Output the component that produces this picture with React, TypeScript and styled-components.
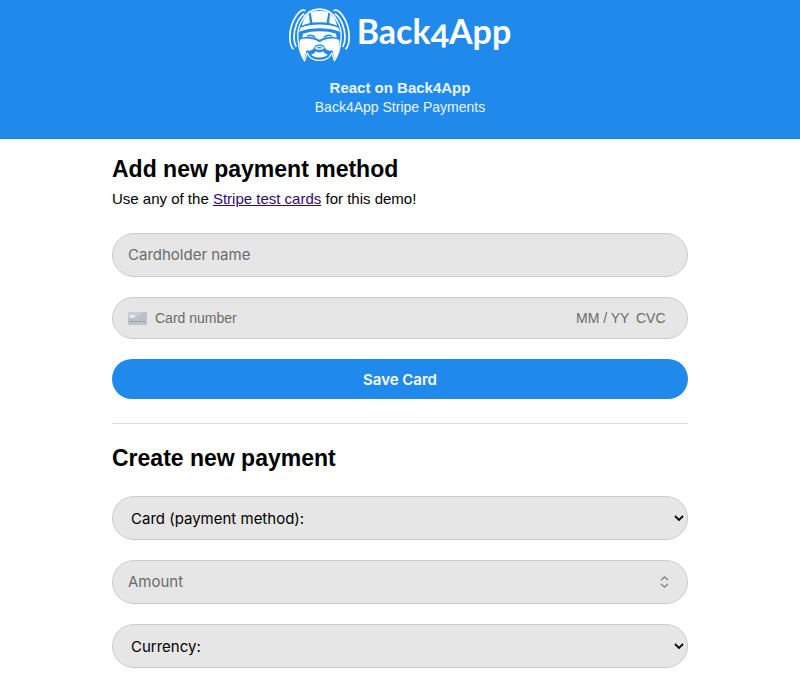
import React from "react";
import styled, { createGlobalStyle } from "styled-components";

const sans = `"Liberation Sans", Arial, sans-serif`;
const ui = `Inter, "Liberation Sans", sans-serif`;
const blue = "#208aec";

const GlobalStyle = createGlobalStyle`
  *, *::before, *::after { box-sizing: border-box; }
  body {
    margin: 0;
    background: #fff;
    color: #000;
    font-family: ${sans};
    font-size: 15px;
  }
`;

const Header = styled.header`
  display: flex;
  flex-direction: column;
  align-items: center;
  padding: 8px 16px 22px;
  background: ${blue};
  border-bottom: 1px solid #1d7fdb;
  color: #e9f4ff;
  text-align: center;
`;

const Brand = styled.div`
  display: flex;
  align-items: center;
  gap: 7px;
  height: 54px;
  margin-bottom: 16px;
  color: #fff;
`;

const BrandName = styled.span`
  padding-bottom: 8px;
  font-family: Lato, ${sans};
  font-size: 34px;
  font-weight: 700;
  line-height: 40px;
  font-variant-numeric: oldstyle-nums;
`;

const Title = styled.p`
  margin: 0;
  font-size: 15px;
  font-weight: 700;
  line-height: 20px;
`;

const Subtitle = styled.p`
  margin: 0;
  font-size: 14px;
  line-height: 18px;
`;

const Main = styled.main`
  padding: 16px 14% 6px;
`;

const Heading = styled.h2`
  margin: 0;
  font-size: 23px;
  font-weight: 700;
  line-height: 28px;
`;

const Intro = styled.p`
  margin: 6px 0 24px;
  font-size: 15px;
  line-height: 20px;
`;

const Link = styled.a`
  color: #330a73;
  text-decoration: underline;
`;

const Form = styled.form`
  display: flex;
  flex-direction: column;
  gap: 20px;
`;

const PaymentForm = styled(Form)`
  margin-top: 24px;
`;

const Field = styled.div<{ $compact?: boolean }>`
  display: flex;
  align-items: center;
  height: ${(p) => (p.$compact ? 42 : 44)}px;
  padding: 0 22px 0 15px;
  border: 1px solid #ccc;
  border-radius: 22px;
  background: #e6e6e6;
`;

const TextInput = styled.input`
  flex: 1;
  min-width: 0;
  padding: 0;
  border: 0;
  outline: 0;
  background: transparent;
  color: #000;
  font-family: ${ui};
  font-size: 15px;
  line-height: 20px;
  appearance: textfield;
  &::placeholder { color: #6b6b6b; opacity: 1; }
  &::-webkit-inner-spin-button { appearance: none; margin: 0; }
`;

const CardInput = styled(TextInput)<{ $width?: number }>`
  flex: ${(p) => (p.$width ? `0 0 ${p.$width}px` : "1")};
  width: ${(p) => (p.$width ? `${p.$width}px` : "auto")};
  font-family: ${sans};
  font-size: 14px;
`;

const CardIcon = styled.svg`
  flex: none;
  margin-right: 8px;
`;

const Spinner = styled.svg`
  flex: none;
  margin-right: -4px;
`;

const SelectField = styled.div`
  display: grid;
  align-items: center;
  > * { grid-area: 1 / 1; }
`;

const Select = styled.select`
  width: 100%;
  height: 44px;
  padding: 0 24px 0 18px;
  border: 1px solid #ccc;
  border-radius: 22px;
  background: #e6e6e6;
  color: #000;
  font-family: ${ui};
  font-size: 15px;
  appearance: none;
`;

const Chevron = styled.svg`
  justify-self: end;
  margin-right: 3px;
  pointer-events: none;
`;

const SaveButton = styled.button`
  height: 40px;
  border: 0;
  border-radius: 20px;
  background: ${blue};
  color: #fff;
  font-family: ${ui};
  font-size: 15px;
  font-weight: 600;
`;

const Divider = styled.hr`
  margin: 24px 0 20px;
  border: 0;
  border-top: 1px solid #ddd;
`;

const Logo = () => (
  <svg width="61" height="54" viewBox="24 24 184 162" fill="none" stroke="#fff" strokeLinecap="round" strokeLinejoin="round" aria-hidden="true">
    <g strokeWidth="5">
      <path d="M72 31C62 27 54 36 46 47C31 69 25 95 27 120C28 133 31 141 36 146" />
      <path d="M68 42C50 56 39 85 39 112C39 124 42 133 45 139" />
      <path d="M160 31C170 27 178 36 186 47C201 69 207 95 205 120C204 133 201 141 196 146" />
      <path d="M164 42C182 56 193 85 193 112C193 124 190 133 187 139" />
      <path d="M64 60C76 38 94 27 116 27C138 27 156 38 168 60" />
    </g>
    <g strokeWidth="4">
      <path d="M64 60C53 76 49 96 51 118C53 144 60 167 71 183L79 159" />
      <path d="M168 60C179 76 183 96 181 118C179 144 172 167 161 183L153 159" />
      <path d="M81 163C92 188 140 188 151 163" />
    </g>
    <g stroke="none" fill="#fff">
      <path d="M63 77C67 59 75 47 84 42L87 69C78 71 70 74 63 77Z" />
      <path d="M169 77C165 59 157 47 148 42L145 69C154 71 162 74 169 77Z" />
      <path d="M89 36C105 31 127 31 143 36L137 68C123 66 109 66 95 68Z" />
      <path d="M54 95L59 83C92 70 140 70 173 83L178 95C141 81 91 81 54 95Z" />
      <path d="M66 101C95 91 137 91 166 101L168 113C151 107 132 111 116 119C100 111 81 107 64 113Z" />
      <path d="M57 119C76 112 101 116 114 126H118C131 116 156 112 175 119C179 140 173 162 162 178L155 151C142 155 134 149 130 139C125 132 107 132 102 139C98 149 90 155 77 151L70 178C59 162 53 140 57 119Z" />
      <path d="M91 164C98 162 102 158 105 154C112 159 120 159 127 154C130 158 134 162 141 164C134 176 98 176 91 164Z" />
    </g>
    <path stroke={blue} strokeWidth="4" d="M79 108C88 104 96 106 102 111M153 108C144 104 136 106 130 111" />
    <path strokeWidth="4" d="M104 144C109 138 123 138 128 144C122 149 110 149 104 144Z" />
  </svg>
);

const DownArrow = () => (
  <Chevron width="12" height="12" viewBox="0 0 12 12" fill="none" stroke="#000" strokeWidth="1.8" aria-hidden="true">
    <path d="M2 4L6 8L10 4" />
  </Chevron>
);

export default function App() {
  return (
    <>
      <GlobalStyle />
      <Header>
        <Brand>
          <Logo />
          <BrandName>Back4App</BrandName>
        </Brand>
        <Title>React on Back4App</Title>
        <Subtitle>Back4App Stripe Payments</Subtitle>
      </Header>
      <Main>
        <Heading>Add new payment method</Heading>
        <Intro>
          Use any of the <Link href="#test-cards">Stripe test cards</Link> for this demo!
        </Intro>
        <Form onSubmit={(e) => e.preventDefault()}>
          <Field>
            <TextInput type="text" aria-label="Cardholder name" placeholder="Cardholder name" />
          </Field>
          <Field $compact>
            <CardIcon width="19" height="13" viewBox="0 0 19 13" aria-hidden="true">
              <rect width="19" height="13" rx="1" fill="#bcc2cb" />
              <path d="M0 6C7 6 12 3 15 0H1Q0 0 0 1Z" fill="#c9ced5" />
              <rect x="2" y="3" width="5" height="3" rx="1" fill="#e9ecef" />
              <path d="M2 9.500H17" stroke="#9099a6" strokeDasharray="3 1" />
            </CardIcon>
            <CardInput aria-label="Card number" placeholder="Card number" inputMode="numeric" />
            <CardInput $width={60} aria-label="Expiry date" placeholder="MM / YY" inputMode="numeric" />
            <CardInput $width={29} aria-label="CVC" placeholder="CVC" inputMode="numeric" />
          </Field>
          <SaveButton type="submit">Save Card</SaveButton>
        </Form>
        <Divider />
        <Heading>Create new payment</Heading>
        <PaymentForm onSubmit={(e) => e.preventDefault()}>
          <SelectField>
            <Select aria-label="Card (payment method)">
              <option>Card (payment method):</option>
            </Select>
            <DownArrow />
          </SelectField>
          <Field>
            <TextInput type="number" aria-label="Amount" placeholder="Amount" />
            <Spinner width="9" height="14" viewBox="0 0 9 14" fill="none" stroke="#858585" strokeWidth="1.5" aria-hidden="true">
              <path d="M1 5L4.500 2L8 5M1 9L4.500 12L8 9" />
            </Spinner>
          </Field>
          <SelectField>
            <Select aria-label="Currency">
              <option>Currency:</option>
            </Select>
            <DownArrow />
          </SelectField>
        </PaymentForm>
      </Main>
    </>
  );
}
